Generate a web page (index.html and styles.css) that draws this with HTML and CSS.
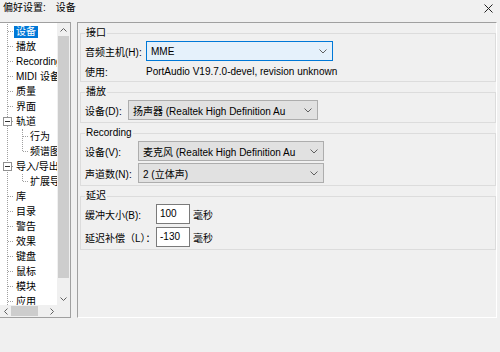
FILE: index.html
```html
<!DOCTYPE html>
<html lang="zh-CN">
<head>
    <meta charset="UTF-8">
    <title>偏好设置</title>
    <link rel="stylesheet" href="styles.css">
</head>
<body>
    <div class="titlebar">
        <span class="title">偏好设置:<span class="title-page">设备</span></span>
        <svg class="close" width="9" height="9" viewBox="0 0 9 9"><path d="M0.5 0.5 L8.5 8.5 M8.5 0.5 L0.5 8.5" stroke="#222" stroke-width="1"/></svg>
    </div>

    <div class="main">
        <div class="tree">
            <div class="tree-view">
                <ul class="tree-list">
                    <li><span class="label sel">设备</span></li>
                    <li><span class="label">播放</span></li>
                    <li><span class="label">Recording</span></li>
                    <li><span class="label">MIDI 设备</span></li>
                    <li><span class="label">质量</span></li>
                    <li><span class="label">界面</span></li>
                    <li class="parent"><span class="toggle"></span><span class="label">轨道</span>
                        <ul class="sub-list">
                            <li><span class="label">行为</span></li>
                            <li><span class="label">频谱图</span></li>
                        </ul>
                    </li>
                    <li class="parent"><span class="toggle"></span><span class="label">导入/导出</span>
                        <ul class="sub-list">
                            <li><span class="label">扩展导入</span></li>
                        </ul>
                    </li>
                    <li><span class="label">库</span></li>
                    <li><span class="label">目录</span></li>
                    <li><span class="label">警告</span></li>
                    <li><span class="label">效果</span></li>
                    <li><span class="label">键盘</span></li>
                    <li><span class="label">鼠标</span></li>
                    <li><span class="label">模块</span></li>
                    <li><span class="label">应用</span></li>
                </ul>
            </div>
            <div class="vscroll">
                <div class="sbtn"><svg width="7" height="4" viewBox="0 0 7 4"><polyline points="0.5,3.5 3.5,0.5 6.5,3.5" fill="none" stroke="#606060"/></svg></div>
                <div class="vthumb"></div>
                <div class="vtrack"></div>
                <div class="sbtn"><svg width="7" height="4" viewBox="0 0 7 4"><polyline points="0.5,0.5 3.5,3.5 6.5,0.5" fill="none" stroke="#606060"/></svg></div>
            </div>
            <div class="hscroll">
                <div class="hbtn"><svg width="4" height="7" viewBox="0 0 4 7"><polyline points="3.5,0.5 0.5,3.5 3.5,6.5" fill="none" stroke="#606060"/></svg></div>
                <div class="hthumb"></div>
                <div class="htrack"></div>
                <div class="hbtn"><svg width="4" height="7" viewBox="0 0 4 7"><polyline points="0.5,0.5 3.5,3.5 0.5,6.5" fill="none" stroke="#606060"/></svg></div>
            </div>
            <div class="corner"></div>
        </div>

        <div class="panel">
            <fieldset class="group g-host">
                <legend>接口</legend>
                <div class="row">
                    <span class="lbl">音频主机(H):</span>
                    <div class="combo focus"><span>MME</span><svg width="8" height="5" viewBox="0 0 8 5"><polyline points="0.5,0.5 4,4 7.5,0.5" fill="none" stroke="#606060"/></svg></div>
                </div>
                <div class="row text-row">
                    <span class="lbl">使用:</span>
                    <span>PortAudio V19.7.0-devel, revision unknown</span>
                </div>
            </fieldset>

            <fieldset class="group g-play">
                <legend>播放</legend>
                <div class="row">
                    <span class="lbl">设备(D):</span>
                    <div class="combo"><span>扬声器 (Realtek High Definition Au</span><svg width="8" height="5" viewBox="0 0 8 5"><polyline points="0.5,0.5 4,4 7.5,0.5" fill="none" stroke="#606060"/></svg></div>
                </div>
            </fieldset>

            <fieldset class="group g-rec">
                <legend>Recording</legend>
                <div class="row">
                    <span class="lbl">设备(V):</span>
                    <div class="combo"><span>麦克风 (Realtek High Definition Au</span><svg width="8" height="5" viewBox="0 0 8 5"><polyline points="0.5,0.5 4,4 7.5,0.5" fill="none" stroke="#606060"/></svg></div>
                </div>
                <div class="row">
                    <span class="lbl">声道数(N):</span>
                    <div class="combo"><span>2 (立体声)</span><svg width="8" height="5" viewBox="0 0 8 5"><polyline points="0.5,0.5 4,4 7.5,0.5" fill="none" stroke="#606060"/></svg></div>
                </div>
            </fieldset>

            <fieldset class="group g-lat">
                <legend>延迟</legend>
                <div class="row">
                    <span class="lbl">缓冲大小(B):</span>
                    <span class="num">100</span>
                    <span class="unit">毫秒</span>
                </div>
                <div class="row">
                    <span class="lbl">延迟补偿（L）：</span>
                    <span class="num">-130</span>
                    <span class="unit">毫秒</span>
                </div>
            </fieldset>
        </div>
    </div>
</body>
</html>
```

FILE: styles.css
```css
body {
    margin: 0;
    background: #f0f0f0;
    font-family: "Segoe UI", "Liberation Sans", "Noto Sans CJK SC", sans-serif;
    font-size: 10px;
    color: #000;
    width: 500px;
    height: 352px;
    overflow: hidden;
}

.titlebar {
    height: 22px;
    display: flex;
    justify-content: space-between;
    align-items: flex-start;
    padding: 2px 7px 0 3px;
    box-sizing: border-box;
    line-height: 12px;
}

.title-page {
    margin-left: 10px;
}

.close {
    margin-top: 2px;
}

.main {
    display: flex;
    height: 296px;
}

/* tree on the left */
.tree {
    width: 70px;
    border-top: 1px solid #a0a0a0;
    border-right: 1px solid #a0a0a0;
    border-bottom: 1px solid #a0a0a0;
    display: grid;
    grid-template-columns: 57px 13px;
    grid-template-rows: 282px 12px;
    flex-shrink: 0;
}

.tree-view {
    background: #fff;
    overflow: hidden;
}

.tree-list,
.sub-list {
    list-style: none;
    margin: 0;
    padding: 0;
}

.tree-list {
    margin-left: 7px;
    margin-top: 1px;
    border-left: 1px dotted #a0a0a0;
    white-space: nowrap;
}

.tree-list li {
    position: relative;
    line-height: 15px;
    padding-left: 6px;
}

.tree-list li::before {
    content: "";
    position: absolute;
    left: 0;
    top: 7px;
    width: 5px;
    border-top: 1px dotted #a0a0a0;
}

.sub-list {
    margin-left: 8px;
    border-left: 1px dotted #a0a0a0;
}

.sub-list li {
    padding-left: 5px;
}

.sub-list li:last-child::after {
    content: "";
    position: absolute;
    left: -1px;
    top: 8px;
    bottom: 0;
    width: 1px;
    background: #fff;
}

.label {
    padding: 0 2px;
    display: inline-block;
    line-height: 12px;
}

.label.sel {
    background: #0078d7;
    color: #fff;
}

.toggle {
    position: absolute;
    left: -5px;
    top: 3px;
    width: 7px;
    height: 7px;
    border: 1px solid #919191;
    background: #fff;
    z-index: 1;
}

.toggle::after {
    content: "";
    position: absolute;
    left: 1px;
    top: 3px;
    width: 5px;
    height: 1px;
    background: #333;
}

.vscroll {
    display: flex;
    flex-direction: column;
    background: #f0f0f0;
}

.sbtn {
    height: 13px;
    display: flex;
    align-items: center;
    justify-content: center;
    flex-shrink: 0;
}

.vthumb {
    height: 242px;
    margin: 0 1px;
    background: #cdcdcd;
}

.vtrack {
    flex: 1;
}

.hscroll {
    display: flex;
    background: #f0f0f0;
}

.hbtn {
    width: 11px;
    display: flex;
    align-items: center;
    justify-content: center;
    flex-shrink: 0;
}

.hthumb {
    width: 27px;
    margin: 1px 0;
    background: #cdcdcd;
}

.htrack {
    flex: 1;
}

.corner {
    background: #f0f0f0;
}

/* settings panel */
.panel {
    margin-left: 6px;
    width: 420px;
    box-sizing: border-box;
    border-top: 1px solid #a0a0a0;
    border-left: 1px solid #a0a0a0;
    border-right: 1px solid #fff;
    border-bottom: 1px solid #fff;
    padding: 3px 0 0 2px;
    display: flex;
    flex-direction: column;
    gap: 3px;
}

.group {
    margin: 0;
    border: 1px solid #dcdcdc;
    padding: 1px 4px 2px;
    display: flex;
    flex-direction: column;
    gap: 2px;
}

.group legend {
    padding: 0 1px;
    line-height: 14px;
}

.row {
    display: flex;
    align-items: center;
    height: 20px;
}

.text-row {
    height: 16px;
}

.g-host .lbl { width: 61px; }
.g-play .lbl { width: 43px; }
.g-rec .lbl { width: 53px; }
.g-lat .lbl { width: 71px; }

.g-host .combo { width: 187px; }
.g-play .combo { width: 190px; }
.g-rec .combo { width: 186px; }

.g-lat {
    gap: 3px;
}

.combo {
    height: 20px;
    box-sizing: border-box;
    border: 1px solid #adadad;
    background: #e1e1e1;
    display: flex;
    align-items: center;
    justify-content: space-between;
    padding: 0 5px 0 4px;
    white-space: nowrap;
    overflow: hidden;
}

.combo.focus {
    border-color: #0078d7;
    background: #e5f1fb;
}

.num {
    width: 34px;
    height: 20px;
    box-sizing: border-box;
    border: 1px solid #7a7a7a;
    background: #fff;
    padding-left: 3px;
    line-height: 18px;
}

.unit {
    margin-left: 3px;
}
```
